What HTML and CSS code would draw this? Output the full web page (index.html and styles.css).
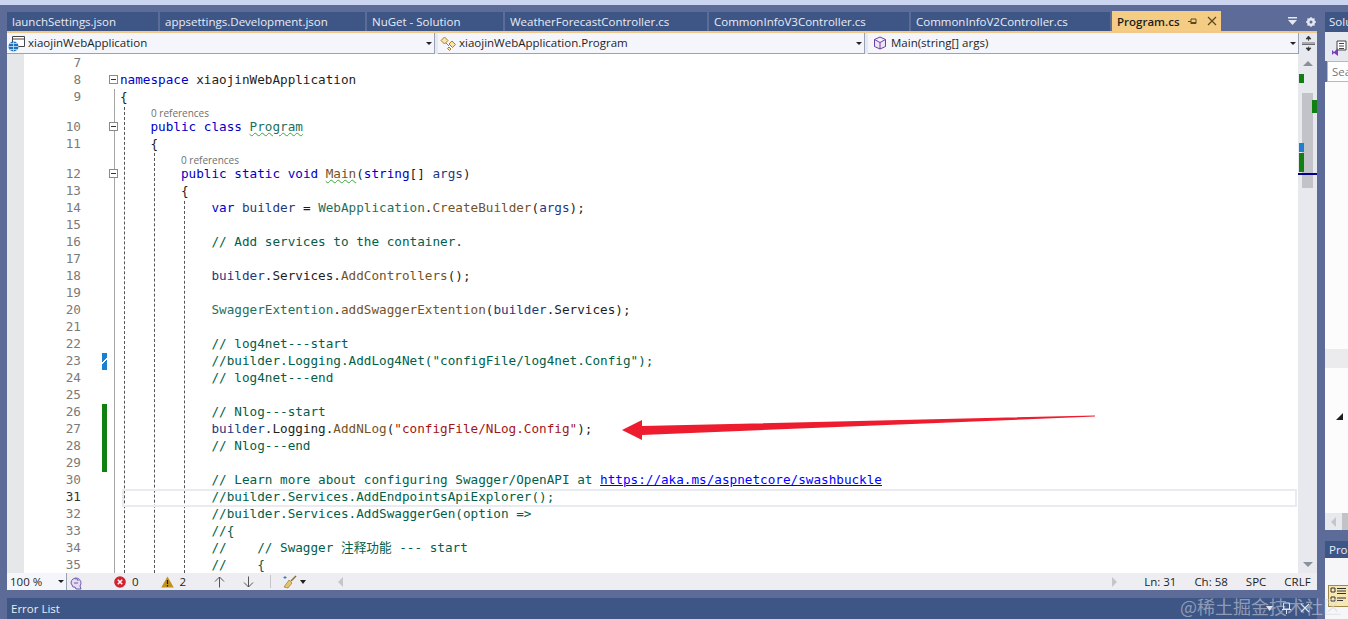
FILE: index.html
```html
<!DOCTYPE html>
<html lang="en">

<head>
  <meta charset="UTF-8" />
  <title>Program.cs</title>
  <link rel="stylesheet" href="styles.css">
</head>

<body>
  <div class="top-strip"></div>

  <div class="workspace">
    <div class="document">
      <div class="tabs">
        <div class="tab">launchSettings.json</div>
        <div class="tab">appsettings.Development.json</div>
        <div class="tab">NuGet - Solution</div>
        <div class="tab">WeatherForecastController.cs</div>
        <div class="tab">CommonInfoV3Controller.cs</div>
        <div class="tab">CommonInfoV2Controller.cs</div>
        <div class="tab active">
          <span>Program.cs</span>
          <svg class="pin" width="9" height="9" viewBox="0 0 9 9"><path d="M0 4.500h3M3 2v5M3 2h5v4.500H3M3 5.500h5" fill="none" stroke="#5a4a20"/></svg>
          <svg class="close" width="10" height="10" viewBox="0 0 10 10"><path d="M1 1l8 8M9 1l-8 8" stroke="#5a4a20" stroke-width="1.200"/></svg>
        </div>
        <div class="tab-tools">
          <svg width="9" height="9" viewBox="0 0 9 9"><path d="M0 0h9v1.500H0zM0 3h9L4.500 8z" fill="#e4e8f4"/></svg>
          <svg width="10" height="10" viewBox="0 0 10 10"><circle cx="5" cy="5" r="3" fill="none" stroke="#e4e8f4" stroke-width="2"/><path d="M5 0v10M0 5h10M1.500 1.500l7 7M8.500 1.500l-7 7" stroke="#e4e8f4" stroke-width="1.300"/><circle cx="5" cy="5" r="1.500" fill="#5d6b99"/></svg>
        </div>
      </div>

      <div class="navbar">
        <div class="combo first">
          <svg class="nav-icon" width="17" height="17" viewBox="0 0 17 17">
            <path d="M4.500 1.500h12v10h-12zM4.500 4h12" fill="#fff" stroke="#444"/>
            <circle cx="5.500" cy="11.500" r="5" fill="#1e73be"/>
            <path d="M0.500 11.500h10M5.500 6.500v10M2 8.500h7M2 14.500h7" stroke="#cfe3f5" stroke-width=".8"/>
          </svg>
          <span>xiaojinWebApplication</span>
          <i class="caret"></i>
        </div>
        <div class="combo second">
          <svg class="nav-icon" width="17" height="15" viewBox="0 0 17 15"><path d="M1 4.500L4.500 1 8 4.500 4.500 8zM9 8l3-3 3.500 3.500-3 3zM9 11l2 2-1.500 1.500-2-2z" fill="#f8e3ae" stroke="#a9801f"/><path d="M6 7l3 3" stroke="#a9801f"/></svg>
          <span>xiaojinWebApplication.Program</span>
          <i class="caret"></i>
        </div>
        <div class="combo third">
          <svg class="nav-icon" width="14" height="14" viewBox="0 0 14 14"><path d="M7 1l5.500 2.500v7L7 13l-5.500-2.500v-7zM1.500 3.500L7 6.500l5.500-3M7 6.500V13" fill="#eee4f8" stroke="#6a3fa6" stroke-linejoin="round"/></svg>
          <span>Main(string[] args)</span>
          <i class="caret"></i>
        </div>
        <div class="split-btn">
          <svg width="13" height="15" viewBox="0 0 13 15"><path d="M0 7h13M0 8.500h13M6.500 0v5M6.500 10.500V15M4 3l2.500-3L9 3zM4 12l2.500 3L9 12z" stroke="#333" fill="#333" stroke-width=".7"/></svg>
        </div>
      </div>

      <div class="editor">
        <div class="selection-margin"></div>
        <div class="code">
          <div class="guide outline"></div>
          <div class="guide g1"></div>
          <div class="guide g2"></div>
          <div class="guide g3"></div>
          <div class="change saved-mark"></div>
          <div class="change green-mark"></div>
          <div class="current-line"></div>

          <div class="line"><span class="num">7</span><span class="gutter"></span><span class="txt"></span></div>
          <div class="line"><span class="num">8</span><span class="gutter"><i class="fold"></i></span><span class="txt"><b class="kw">namespace</b> xiaojinWebApplication</span></div>
          <div class="line"><span class="num">9</span><span class="gutter"></span><span class="txt">{</span></div>
          <div class="lens one">0 references</div>
          <div class="line"><span class="num">10</span><span class="gutter"><i class="fold"></i></span><span class="txt">    <b class="kw">public class</b> <b class="type squiggle">Program</b></span></div>
          <div class="line"><span class="num">11</span><span class="gutter"></span><span class="txt">    {</span></div>
          <div class="lens two">0 references</div>
          <div class="line"><span class="num">12</span><span class="gutter"><i class="fold"></i></span><span class="txt">        <b class="kw">public static void</b> <b class="fn squiggle">Main</b>(<b class="kw">string</b>[] <b class="var">args</b>)</span></div>
          <div class="line"><span class="num">13</span><span class="gutter"></span><span class="txt">        {</span></div>
          <div class="line"><span class="num">14</span><span class="gutter"></span><span class="txt">            <b class="kw">var</b> <b class="var">builder</b> = <b class="type">WebApplication</b>.<b class="fn">CreateBuilder</b>(<b class="var">args</b>);</span></div>
          <div class="line"><span class="num">15</span><span class="gutter"></span><span class="txt"></span></div>
          <div class="line"><span class="num">16</span><span class="gutter"></span><span class="txt">            <b class="com">// Add services to the container.</b></span></div>
          <div class="line"><span class="num">17</span><span class="gutter"></span><span class="txt"></span></div>
          <div class="line"><span class="num">18</span><span class="gutter"></span><span class="txt">            <b class="var">builder</b>.Services.<b class="fn">AddControllers</b>();</span></div>
          <div class="line"><span class="num">19</span><span class="gutter"></span><span class="txt"></span></div>
          <div class="line"><span class="num">20</span><span class="gutter"></span><span class="txt">            <b class="type">SwaggerExtention</b>.<b class="fn">addSwaggerExtention</b>(<b class="var">builder</b>.Services);</span></div>
          <div class="line"><span class="num">21</span><span class="gutter"></span><span class="txt"></span></div>
          <div class="line"><span class="num">22</span><span class="gutter"></span><span class="txt">            <b class="com">// log4net---start</b></span></div>
          <div class="line"><span class="num">23</span><span class="gutter"></span><span class="txt">            <b class="com">//builder.Logging.AddLog4Net("configFile/log4net.Config");</b></span></div>
          <div class="line"><span class="num">24</span><span class="gutter"></span><span class="txt">            <b class="com">// log4net---end</b></span></div>
          <div class="line"><span class="num">25</span><span class="gutter"></span><span class="txt"></span></div>
          <div class="line"><span class="num">26</span><span class="gutter"></span><span class="txt">            <b class="com">// Nlog---start</b></span></div>
          <div class="line"><span class="num">27</span><span class="gutter"></span><span class="txt">            <b class="var">builder</b>.Logging.<b class="fn">AddNLog</b>(<b class="str">"configFile/NLog.Config"</b>);</span></div>
          <div class="line"><span class="num">28</span><span class="gutter"></span><span class="txt">            <b class="com">// Nlog---end</b></span></div>
          <div class="line"><span class="num">29</span><span class="gutter"></span><span class="txt"></span></div>
          <div class="line"><span class="num">30</span><span class="gutter"></span><span class="txt">            <b class="com">// Learn more about configuring Swagger/OpenAPI at <a class="link">https://aka.ms/aspnetcore/swashbuckle</a></b></span></div>
          <div class="line"><span class="num dark">31</span><span class="gutter"></span><span class="txt">            <b class="com">//builder.Services.AddEndpointsApiExplorer();</b></span></div>
          <div class="line"><span class="num">32</span><span class="gutter"></span><span class="txt">            <b class="com">//builder.Services.AddSwaggerGen(option =&gt;</b></span></div>
          <div class="line"><span class="num">33</span><span class="gutter"></span><span class="txt">            <b class="com">//{</b></span></div>
          <div class="line"><span class="num">34</span><span class="gutter"></span><span class="txt">            <b class="com">//    // Swagger 注释功能 --- start</b></span></div>
          <div class="line"><span class="num">35</span><span class="gutter"></span><span class="txt">            <b class="com">//    {</b></span></div>

          <svg class="arrow" width="480" height="28" viewBox="0 0 480 28"><path d="M1 15L21 5v6L474 .5v1L21 20v5z" fill="#ed1c2e"/></svg>
        </div>

        <div class="vscroll">
          <i class="arrow-up"></i>
          <div class="thumb"></div>
          <i class="mark m1"></i>
          <i class="mark m2"></i>
          <i class="mark m3"></i>
          <i class="mark m4"></i>
          <i class="mark m5"></i>
          <i class="arrow-down"></i>
        </div>
      </div>

      <div class="status">
        <div class="zoom-box"><span>100 %</span><i class="caret"></i></div>
        <svg class="status-first" width="16" height="16" viewBox="0 0 16 16"><path d="M3 9a5 5 0 1 1 9 3l1 3H8l-1-2H5z" fill="#e3dcf3" stroke="#6d5aa8"/><path d="M7 5a2 2 0 0 1 3 2M6 9h4" stroke="#6d5aa8" fill="none"/></svg>
        <div class="count errors">
          <svg width="12" height="12" viewBox="0 0 12 12"><circle cx="6" cy="6" r="5.800" fill="#d3222f"/><path d="M3.800 3.800l4.400 4.400M8.200 3.800l-4.400 4.400" stroke="#fff" stroke-width="1.500"/></svg>
          <span>0</span>
        </div>
        <div class="count warnings">
          <svg width="13" height="12" viewBox="0 0 13 12"><path d="M6.500 0.500L12.800 11.500H.2z" fill="#c09320"/><path d="M6.500 4v4M6.500 9v1.500" stroke="#231c05" stroke-width="1.200"/></svg>
          <span>2</span>
        </div>
        <svg class="nav-arrow up" width="11" height="12" viewBox="0 0 11 12"><path d="M5.500 11.500V1M1 5.500L5.500 1 10 5.500" fill="none" stroke="#555"/></svg>
        <svg class="nav-arrow down" width="11" height="12" viewBox="0 0 11 12"><path d="M5.500 .5V11M1 6.500L5.500 11 10 6.500" fill="none" stroke="#555"/></svg>
        <i class="status-sep"></i>
        <svg class="brush" width="14" height="14" viewBox="0 0 14 14"><path d="M13 1L8 6" stroke="#8a6a2c" stroke-width="1.500"/><path d="M6 5l3 3-4 5-4-1z" fill="#e6c66a" stroke="#8a6a2c" stroke-width=".6"/><path d="M2 1v3M.5 2.500h3" stroke="#3a76c4"/></svg>
        <i class="brush-caret"></i>
        <div class="hscroll"><i class="h-left"></i><i class="h-right"></i></div>
        <div class="status-info">
          <span>Ln: 31</span>
          <span>Ch: 58</span>
          <span>SPC</span>
          <span>CRLF</span>
        </div>
      </div>

      <div class="error-bar">
        <div class="error-title">Error List</div>
        <div class="error-tools">
          <svg width="7" height="5" viewBox="0 0 7 5"><path d="M0 0h7L3.500 5z" fill="#dfe4f2"/></svg>
          <svg width="9" height="12" viewBox="0 0 9 12"><path d="M1.500 1h6v6h-6zM0 7.500h9M4.500 8v4" fill="none" stroke="#dfe4f2"/></svg>
          <svg width="10" height="10" viewBox="0 0 10 10"><path d="M1 1l8 8M9 1l-8 8" stroke="#dfe4f2" stroke-width="1.200"/></svg>
        </div>
        <div class="watermark">@稀土掘金技术社区</div>
      </div>
    </div>

    <aside class="side">
      <div class="side-title first">Solu</div>
      <div class="side-tool">
        <svg width="16" height="16" viewBox="0 0 16 16"><path d="M6 1h9v9H6z" fill="#fff" stroke="#444"/><path d="M8 3.500h5M8 6h5M8 8.500h5" stroke="#444"/><path d="M1 10l2 2 4-4v8l-4-3-2 2z" fill="#7a3fb8"/></svg>
      </div>
      <div class="side-search">Sea</div>
      <div class="side-body">
        <i class="side-marker"></i>
        <i class="side-expander"></i>
      </div>
      <div class="side-scroll"><i class="h-left"></i><i class="side-thumb"></i></div>
      <div class="side-gap"></div>
      <div class="side-title">Pro</div>
      <div class="side-props">
        <svg width="22" height="22" viewBox="0 0 22 22"><rect x=".5" y=".5" width="21" height="21" fill="#f7e7b2" stroke="#a08a4a"/><path d="M3 3h4v4H3zM3 12h4v4H3zM9 3.500h9M9 6h9M9 8.500h9M9 13h9M9 15.500h6" stroke="#333" fill="none"/></svg>
      </div>
    </aside>
  </div>
</body>

</html>
```

FILE: styles.css
```css
* {
  box-sizing: border-box;
}

html,
body {
  height: 100%;
}

body {
  margin: 0;
  width: 1348px;
  height: 619px;
  overflow: hidden;
  display: flex;
  flex-direction: column;
  background: #5d6b99;
  font-family: "Open Sans", "Noto Sans", sans-serif;
  font-size: 11.5px;
  color: #1e1e1e;
}

.top-strip {
  height: 5px;
  background: #ccd5f0;
}

.workspace {
  display: flex;
  flex: 1;
  min-height: 0;
  padding-left: 7px;
}

.document {
  width: 1310px;
  display: flex;
  flex-direction: column;
  padding-top: 7px;
}

/* tabs */
.tabs {
  display: flex;
  height: 19px;
  gap: 2px;
  color: #e8ecf7;
}

.tab {
  background: #3e5685;
  padding: 1px 0 0 5px;
  line-height: 17px;
  white-space: nowrap;
}

.tab:nth-child(1) { width: 151px; }
.tab:nth-child(2) { width: 205px; }
.tab:nth-child(3) { width: 136px; }
.tab:nth-child(4) { width: 202px; }
.tab:nth-child(5) { width: 200px; }
.tab:nth-child(6) { width: 199px; }

.tab.active {
  width: 109px;
  height: 20px;
  margin-top: -1px;
  background: #f5cc84;
  color: #1e1e1e;
  font-weight: 600;
  display: flex;
  align-items: center;
  padding: 0 0 0 5px;
}

.pin {
  margin-left: 8px;
}

.close {
  margin-left: 10px;
}

.tab-tools {
  flex: 1;
  display: flex;
  align-items: center;
  justify-content: flex-end;
  gap: 9px;
  padding-right: 1px;
}

/* navigation bar */
.navbar {
  height: 23px;
  display: flex;
  border-top: 2px solid #f0c98a;
  background: #e7e9f1;
}

.combo {
  display: flex;
  align-items: center;
  height: 21px;
  background: #f5f6fc;
  border-bottom: 1px solid #9aa2b8;
  border-right: 1px solid #9aa2b8;
  line-height: 20px;
}

.combo.first { width: 428px; padding-left: 1px; margin-right: 3px; }
.combo.second { width: 427px; padding-left: 2px; margin-right: 3px; }
.combo.third { width: 431px; padding-left: 5px; }

.combo span {
  margin-left: 3px;
  flex: 1;
}

.combo.second span {
  margin-left: 2px;
}

.combo.third span {
  margin-left: 4px;
}

.caret {
  width: 0;
  height: 0;
  margin-right: 2px;
  border-left: 3px solid transparent;
  border-right: 3px solid transparent;
  border-top: 3px solid #222;
}

.split-btn {
  flex: 1;
  display: flex;
  align-items: center;
  justify-content: center;
  height: 21px;
}

/* editor */
.editor {
  height: 519px;
  display: flex;
  background: #fff;
  overflow: hidden;
}

.selection-margin {
  width: 17px;
  background: #e6e7e8;
}

.code {
  position: relative;
  flex: 1;
  overflow: hidden;
  font-family: "DejaVu Sans Mono", "Noto Sans CJK SC", monospace;
  font-size: 12.67px;
  color: #1e1e1e;
}

.line {
  position: relative;
  display: flex;
  height: 17px;
  line-height: 17px;
  white-space: pre;
}

.num {
  width: 57px;
  text-align: right;
  color: #7a7a7a;
}

.num.dark {
  color: #333;
}

.gutter {
  position: relative;
  width: 39px;
}

.fold {
  position: absolute;
  left: 28px;
  top: 4px;
  width: 9px;
  height: 9px;
  background: #fff;
  border: 1px solid #8a8a8a;
}

.fold::after {
  content: "";
  position: absolute;
  left: 1px;
  top: 3px;
  width: 5px;
  height: 1px;
  background: #333;
}

.txt b {
  font-weight: normal;
}

.kw { color: #0000c8; }
.type { color: #1f6f5c; }
.fn { color: #74531f; }
.var { color: #1f377f; }
.com { color: #00604a; }
.str { color: #a31515; }

.link {
  color: #0000ff;
  text-decoration: underline;
}

.squiggle {
  text-decoration: underline wavy #3aa63a 1px;
}

.lens {
  height: 13px;
  line-height: 17px;
  font-family: "Open Sans", sans-serif;
  font-size: 10px;
  color: #6e6e6e;
}

.lens.one { padding-left: 127px; }
.lens.two { padding-left: 157px; }

.guide {
  position: absolute;
  width: 1px;
  bottom: 0;
}

.outline {
  left: 90px;
  top: 35px;
  background: #a5a5a5;
}

.g1, .g2, .g3 {
  border-left: 1px dashed #555;
}

.g1 { left: 100px; top: 53px; }
.g2 { left: 130px; top: 99px; }
.g3 { left: 160px; top: 147px; }

.change {
  position: absolute;
  left: 78px;
  width: 5px;
}

.saved-mark {
  top: 299px;
  height: 17px;
  background: linear-gradient(135deg, #1c7fd0 0 42%, #fff 42% 52%, #1c7fd0 52%);
}

.green-mark {
  top: 350px;
  height: 68px;
  background: #108010;
}

.current-line {
  position: absolute;
  left: 98px;
  right: 1px;
  top: 435px;
  height: 18px;
  border: 2px solid #eaebf0;
}

.arrow {
  position: absolute;
  left: 597px;
  top: 361px;
}

/* editor scrollbar */
.vscroll {
  position: relative;
  width: 19px;
  background: #e8e9ef;
}

.arrow-up,
.arrow-down {
  position: absolute;
  left: 5px;
  width: 0;
  height: 0;
  border-left: 5px solid transparent;
  border-right: 5px solid transparent;
}

.arrow-up {
  top: 7px;
  border-bottom: 5px solid #8a8f9c;
}

.arrow-down {
  bottom: 6px;
  border-top: 5px solid #8a8f9c;
}

.thumb {
  position: absolute;
  left: 4px;
  top: 39px;
  width: 11px;
  height: 95px;
  background: #c2c3c9;
}

.mark {
  position: absolute;
}

.m1 { left: 1px; top: 20px; width: 5px; height: 9px; background: #108010; }
.m2 { left: 14px; top: 46px; width: 5px; height: 13px; background: #108010; }
.m3 { left: 1px; top: 89px; width: 5px; height: 9px; background: #1c7fd0; }
.m4 { left: 1px; top: 99px; width: 5px; height: 19px; background: #108010; }
.m5 { left: 0; top: 119px; width: 19px; height: 2px; background: #00008b; }

/* status bar */
.status {
  height: 17px;
  display: flex;
  align-items: center;
  background: #eeeef2;
}

.zoom-box {
  display: flex;
  align-items: center;
  justify-content: space-between;
  width: 60px;
  height: 17px;
  padding-left: 3px;
  background: #f5f6fc;
  border-right: 1px solid #9aa2b8;
}

.status-first {
  margin-left: 1px;
}

.count {
  display: flex;
  align-items: center;
  gap: 6px;
}

.errors { margin-left: 30px; }
.warnings { margin-left: 22px; }
.nav-arrow.up { margin-left: 28px; }
.nav-arrow.down { margin-left: 18px; }

.status-sep {
  width: 1px;
  height: 13px;
  margin-left: 16px;
  background: #c5c6cc;
}

.brush {
  margin-left: 12px;
}

.brush-caret {
  width: 0;
  height: 0;
  margin-left: 3px;
  border-left: 3px solid transparent;
  border-right: 3px solid transparent;
  border-top: 4px solid #222;
}

.hscroll {
  width: 779px;
  margin-left: 32px;
  display: flex;
  justify-content: space-between;
  align-items: center;
}

.h-left {
  flex: none;
  width: 0;
  height: 0;
  border-top: 5px solid transparent;
  border-bottom: 5px solid transparent;
  border-right: 5px solid #c4c6cc;
}

.h-right {
  width: 0;
  height: 0;
  border-top: 5px solid transparent;
  border-bottom: 5px solid transparent;
  border-left: 5px solid #c4c6cc;
}

.status-info {
  display: flex;
  gap: 18px;
  margin-left: 27px;
  white-space: nowrap;
}

/* error list */
.error-bar {
  position: relative;
  flex: 1;
  margin-top: 8px;
  background: #3e5685;
}

.error-title {
  padding-left: 4px;
  line-height: 21px;
  color: #e8ecf7;
}

.error-tools {
  position: absolute;
  right: 7px;
  top: 4px;
  display: flex;
  align-items: center;
  gap: 9px;
}

.watermark {
  position: absolute;
  left: 1173px;
  top: -5px;
  z-index: 2;
  font-family: "Noto Sans CJK SC", sans-serif;
  font-size: 18px;
  white-space: nowrap;
  color: rgba(215, 215, 225, 0.55);
}

/* right side panel */
.side {
  width: 23px;
  margin-left: 8px;
  display: flex;
  flex-direction: column;
  padding-top: 7px;
  overflow: hidden;
}

.side-title {
  height: 17px;
  line-height: 17px;
  padding-left: 4px;
  background: #3e5685;
  color: #e8ecf7;
}

.side-title.first {
  height: 20px;
  line-height: 19px;
}

.side-tool {
  height: 29px;
  padding: 8px 0 0 6px;
  background: #e7e9f1;
}

.side-search {
  height: 21px;
  line-height: 19px;
  padding-left: 4px;
  background: #fff;
  border: 1px solid #b4b8c6;
  border-right: none;
  margin-left: 2px;
  color: #777;
}

.side-body {
  position: relative;
  flex: 1;
  background: #fcfcfd;
}

.side-marker {
  position: absolute;
  left: 0;
  right: 0;
  top: 267px;
  height: 19px;
  background: #ebebee;
}

.side-expander {
  position: absolute;
  left: 11px;
  top: 331px;
  width: 0;
  height: 0;
  border-left: 7px solid transparent;
  border-bottom: 7px solid #1e1e1e;
}

.side-scroll {
  height: 17px;
  display: flex;
  align-items: center;
  gap: 6px;
  padding-left: 6px;
  background: #e8e9ef;
}

.side-thumb {
  width: 12px;
  height: 17px;
  background: #c2c3c9;
}

.side-gap {
  height: 11px;
}

.side-props {
  flex: none;
  height: 61px;
  padding: 27px 0 0 3px;
  background: #f6f6f8;
}
```
